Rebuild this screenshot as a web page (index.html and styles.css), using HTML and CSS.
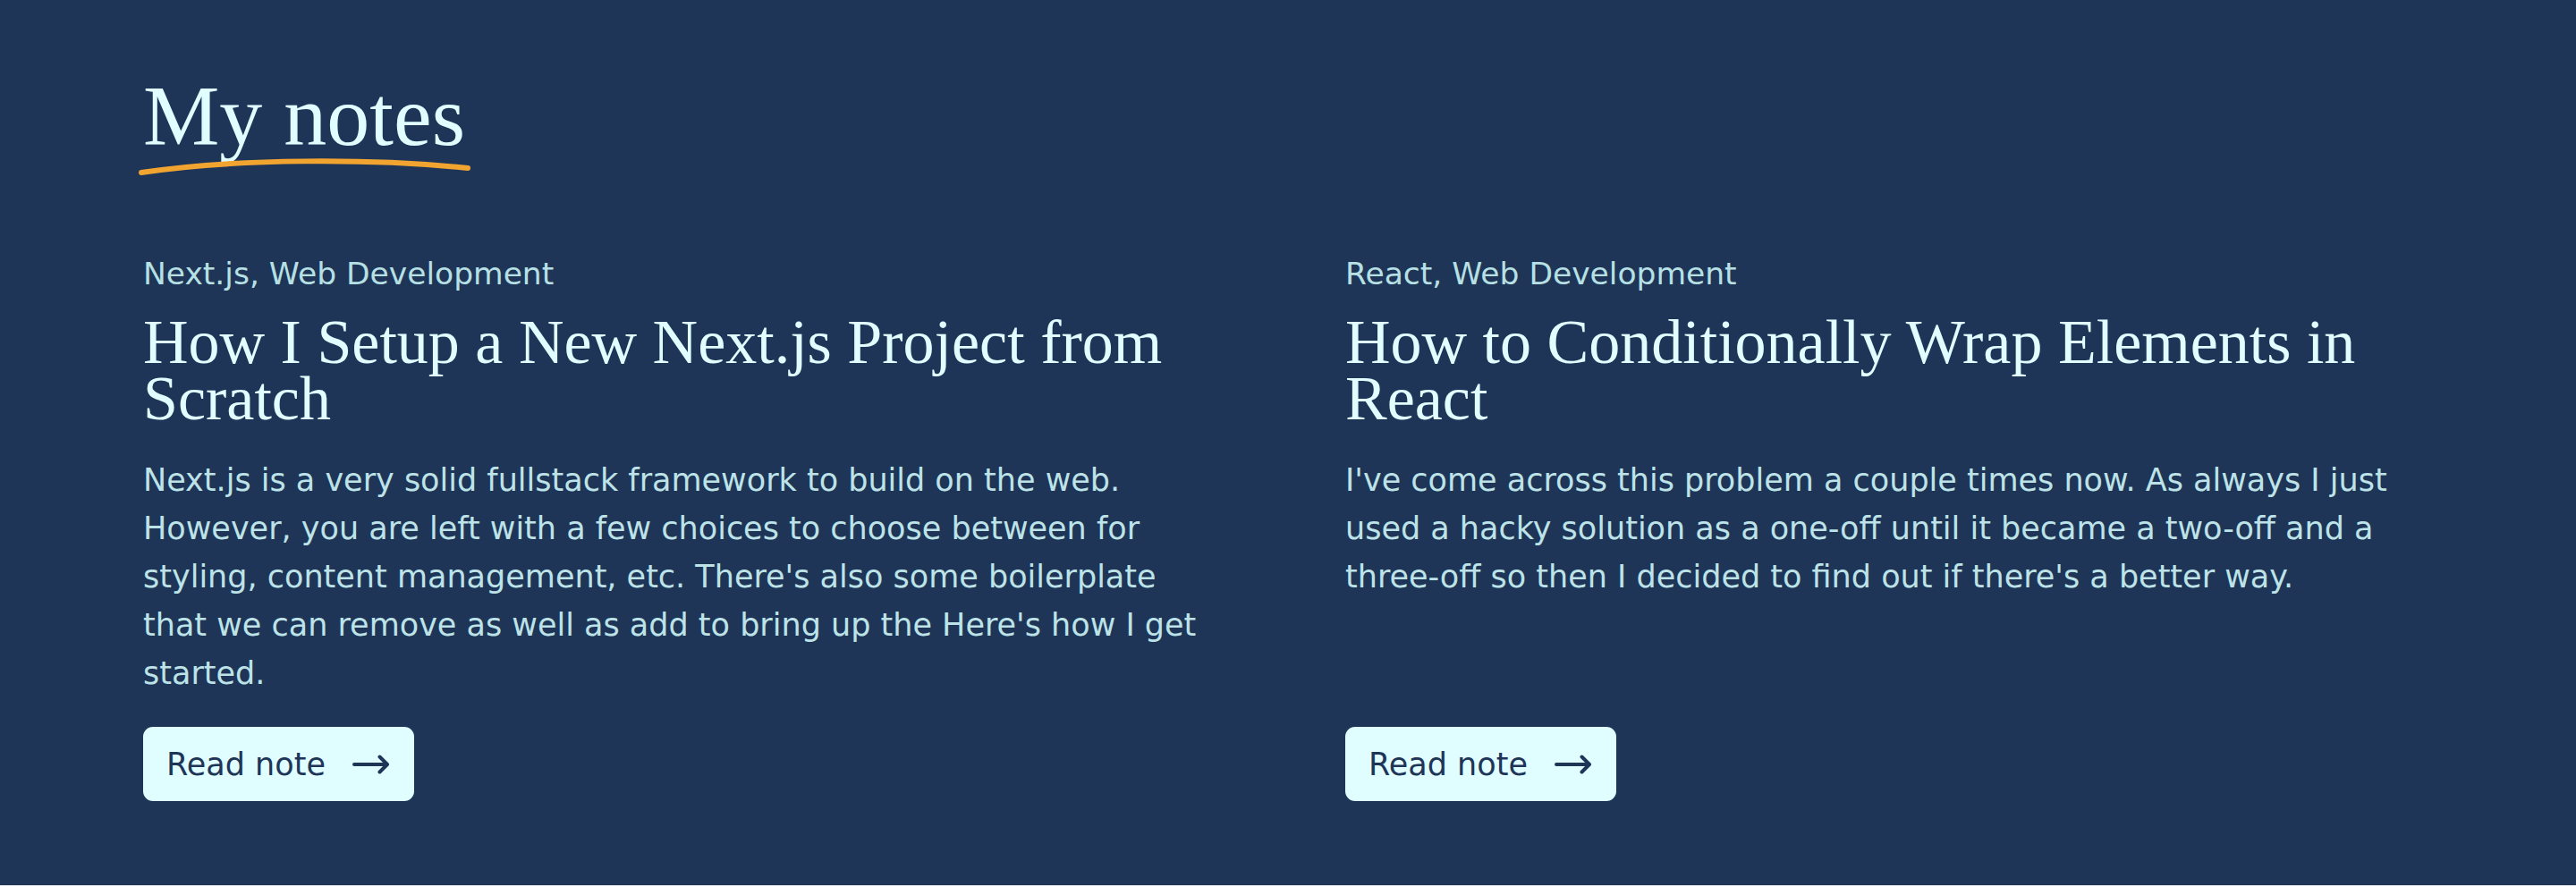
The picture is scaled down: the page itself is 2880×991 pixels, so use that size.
FILE: index.html
```html
<!DOCTYPE html>
<html lang="en">
<head>
<meta charset="utf-8">
<title>My notes</title>
<link rel="stylesheet" href="styles.css">
</head>
<body>
<section class="notes">
  <h2 class="notes-title">
    <span class="notes-title-text">My notes</span>
    <svg class="notes-underline" width="376" height="24" viewBox="0 0 376 24" aria-hidden="true">
      <path d="M4 19 C 110 3, 262 3, 369 14" fill="none" stroke="#F2A431" stroke-width="6" stroke-linecap="round"/>
    </svg>
  </h2>
  <div class="notes-grid">
    <article class="note">
      <p class="note-cats">Next.js, Web Development</p>
      <h3 class="note-heading">How I Setup a New Next.js Project from Scratch</h3>
      <p class="note-body">Next.js is a very solid fullstack framework to build on the web. However, you are left with a few choices to choose between for styling, content management, etc. There's also some boilerplate that we can remove as well as add to bring up the Here's how I get started.</p>
      <a class="note-btn" href="#">Read note
        <svg class="note-arrow" width="42" height="22" viewBox="0 0 42 22" aria-hidden="true">
          <path d="M2 11 H39 M30.5 2.5 L39 11 L30.5 19.5" fill="none" stroke="currentColor" stroke-width="4" stroke-linecap="round" stroke-linejoin="round"/>
        </svg>
      </a>
    </article>
    <article class="note">
      <p class="note-cats">React, Web Development</p>
      <h3 class="note-heading">How to Conditionally Wrap Elements in React</h3>
      <p class="note-body">I've come across this problem a couple times now. As always I just used a hacky solution as a one-off until it became a two-off and a three-off so then I decided to find out if there's a better way.</p>
      <a class="note-btn" href="#">Read note
        <svg class="note-arrow" width="42" height="22" viewBox="0 0 42 22" aria-hidden="true">
          <path d="M2 11 H39 M30.5 2.5 L39 11 L30.5 19.5" fill="none" stroke="currentColor" stroke-width="4" stroke-linecap="round" stroke-linejoin="round"/>
        </svg>
      </a>
    </article>
  </div>
</section>
</body>
</html>
```
FILE: styles.css
```css
* { box-sizing: border-box; }

html, body {
  margin: 0;
  padding: 0;
  background: #dcdcdc;
}

.notes {
  height: 990px;
  background: #1E3557;
  padding: 82px 160px 0;
  font-family: "DejaVu Sans", "Liberation Sans", sans-serif;
}

.notes-title {
  position: relative;
  display: inline-block;
  margin: 0;
  font-family: "Liberation Serif", serif;
  font-weight: 400;
  font-size: 96px;
  line-height: 96px;
  color: #E0FDFF;
}

.notes-underline {
  position: absolute;
  left: -6px;
  top: 92px;
}

.notes-grid {
  display: grid;
  grid-template-columns: 1204px 1204px;
  column-gap: 140px;
  margin-top: 106px;
}

.note {
  display: flex;
  flex-direction: column;
  align-items: flex-start;
}

.note-cats {
  margin: 0;
  font-size: 34.5px;
  line-height: 44px;
  color: #B7E0E5;
}

.note-heading {
  margin: 23px 0 0;
  font-family: "Liberation Serif", serif;
  font-weight: 400;
  font-size: 70px;
  line-height: 63px;
  color: #E0FDFF;
}

.note-body {
  margin: 33px 0 0;
  font-size: 35px;
  line-height: 54px;
  color: #BDE3E8;
  flex: 1;
}

.note-btn {
  display: inline-flex;
  align-items: center;
  gap: 30px;
  margin-top: 33px;
  height: 83px;
  padding: 0 27px 0 26px;
  border-radius: 11px;
  background: #E0FDFF;
  color: #1E3557;
  text-decoration: none;
  font-size: 35px;
}

.note-arrow { display: block; }
```
